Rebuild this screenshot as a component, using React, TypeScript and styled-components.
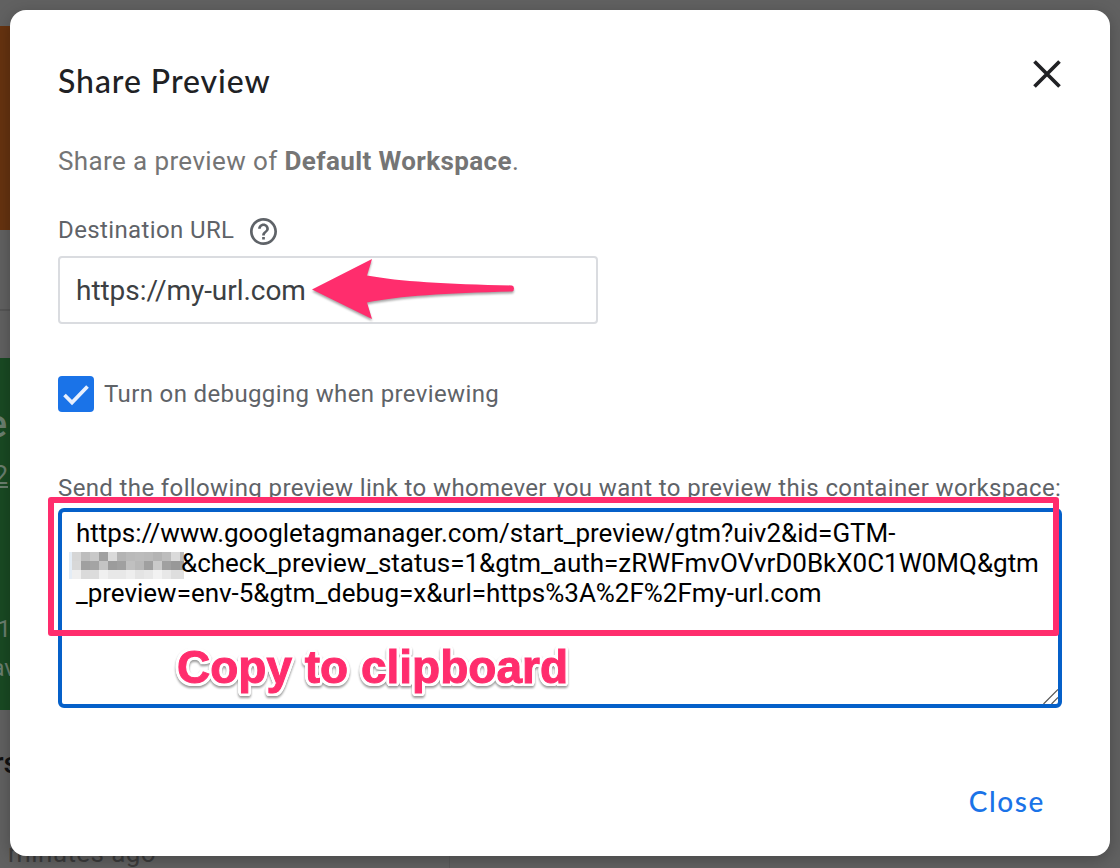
import React from "react";
import styled, { createGlobalStyle } from "styled-components";

const Global = createGlobalStyle`
  * { box-sizing: border-box; }
  body { margin: 0; background: #616161; font-family: Roboto, "Liberation Sans", sans-serif; overflow: hidden; }
`;
const Screen = styled.main`
  position: relative;
  display: flex;
  width: 1120px;
  height: 868px;
  padding: 10px 10px 12px;
  overflow: hidden;
`;
const Backdrop = styled.div`
  position: absolute;
  inset: 0;
  display: flex;
  flex-direction: column;
  background: #616161;
`;
const Band = styled.div<{ $h: number; $bg?: string; $line?: string; $edge?: boolean }>`
  position: relative;
  width: 450px;
  height: ${(p) => p.$h}px;
  flex: none;
  background: ${(p) => p.$bg ?? "#616161"};
  border-bottom: ${(p) => (p.$line ? `2px solid ${p.$line}` : "0")};
  border-right: ${(p) => (p.$edge ? "1px solid #595959" : "0")};
`;
const Peek = styled.span<{ $y: number; $right: number; $size: number; $color: string; $weight?: number; $ls?: number; $underline?: boolean }>`
  position: absolute;
  top: ${(p) => p.$y}px;
  right: calc(100% - ${(p) => p.$right}px);
  font-size: ${(p) => p.$size}px;
  line-height: ${(p) => p.$size}px;
  font-weight: ${(p) => p.$weight ?? 400};
  letter-spacing: ${(p) => p.$ls ?? 0}px;
  color: ${(p) => p.$color};
  text-decoration: ${(p) => (p.$underline ? "underline" : "none")};
  white-space: nowrap;
`;
const Dialog = styled.section`
  position: relative;
  display: flex;
  flex-direction: column;
  width: 1100px;
  height: 846px;
  padding: 48px 48px 0;
  border-radius: 16px;
  background: #fff;
  box-shadow: 0 4px 16px rgba(0, 0, 0, 0.25);
`;
const Header = styled.header`
  display: flex;
  justify-content: space-between;
  height: 46px;
`;
const Title = styled.h1`
  margin: 0;
  font: 500 32px/45px Lato, sans-serif;
  letter-spacing: 0.95px;
  color: #202124;
`;
const CloseIcon = styled.svg`
  width: 28px;
  height: 28px;
  margin: 2px 1.5px 0 0;
`;
const Intro = styled.p`
  margin: 39px 0 0;
  font-size: 26px;
  line-height: 36px;
  letter-spacing: 0.39px;
  color: #757575;
  white-space: nowrap;
`;
const Label = styled.div<{ $top: number }>`
  display: flex;
  align-items: center;
  gap: 16px;
  height: 32px;
  margin-top: ${(p) => p.$top}px;
  font-size: 24px;
  letter-spacing: 0.375px;
  color: #5f6368;
  white-space: nowrap;
`;
const HelpIcon = styled.svg`
  width: 27px;
  height: 27px;
  margin-top: 3px;
`;
const UrlField = styled.div`
  position: relative;
  display: flex;
  align-items: center;
  width: 540px;
  height: 68px;
  margin-top: 10px;
  padding-left: 16px;
  border: 2px solid #dadce0;
  border-radius: 4px;
  font-size: 28px;
  letter-spacing: -0.04px;
  color: #3c4043;
`;
const Arrow = styled.svg`
  position: absolute;
  left: 250px;
  top: -2px;
  filter: drop-shadow(0 2px 1px rgba(0, 0, 0, 0.35));
`;
const CheckRow = styled.label`
  display: flex;
  align-items: center;
  gap: 10px;
  height: 36px;
  margin-top: 52px;
  font-size: 24px;
  letter-spacing: 0.365px;
  color: #5f6368;
  white-space: nowrap;
`;
const CheckBox = styled.span`
  display: flex;
  width: 36px;
  height: 36px;
  border-radius: 4px;
  background: #1a73e8;
`;
const LinkBox = styled.div`
  position: relative;
  width: 1004px;
  height: 200px;
  margin-top: 4px;
  padding: 6px 14px;
  border: 4px solid #0560c9;
  border-radius: 6px;
  font-size: 26px;
  letter-spacing: -0.015px;
  color: #000;
`;
const Line = styled.div`
  display: flex;
  height: 30px;
  line-height: 30px;
  white-space: nowrap;
`;
const Mosaic = styled.svg`
  flex: none;
  width: 115px;
  height: 27px;
  margin: 4px -3px 0 -7px;
`;
const Grip = styled.svg`
  position: absolute;
  right: 0;
  bottom: 0;
`;
const Highlight = styled.div`
  position: absolute;
  left: -14px;
  top: -15px;
  width: 1011px;
  height: 139px;
  border: 6px solid #ff2d6d;
  border-radius: 3px;
`;
const outline = Array.from({ length: 20 }, (_, i) => {
  const a = (i / 20) * Math.PI * 2;
  return `${(Math.cos(a) * 3.2).toFixed(2)}px ${(Math.sin(a) * 3.2).toFixed(2)}px 0 #fff`;
}).join(", ");
const Caption = styled.strong`
  position: absolute;
  left: 115px;
  top: 128px;
  font: 700 46px/54px "Liberation Sans", sans-serif;
  letter-spacing: 0;
  color: #ff2d6d;
  -webkit-text-stroke: 1px #ff2d6d;
  text-shadow: ${outline};
  filter: drop-shadow(0 2px 1px rgba(0, 0, 0, 0.4));
  white-space: nowrap;
`;
const Footer = styled.footer`
  display: flex;
  justify-content: flex-end;
  margin-top: 74px;
  padding-right: 17px;
`;
const CloseButton = styled.button`
  padding: 0;
  border: 0;
  background: none;
  font: 500 28px/38px Lato, sans-serif;
  letter-spacing: 1.6px;
  color: #1a73e8;
`;

const tones = [
  ["#d6d6d6", "#bdbdbd", "#c8c8c8", "#a0a0a0", "#dadada", "#b4b4b4", "#bababa", "#bcbcbc", "#bababa", "#b4b4b4", "#bdbdbd", "#dadada", "#bababa"],
  ["#d8d8d8", "#a0a0a0", "#a4a4a4", "#c4c4c4", "#9c9c9c", "#a0a0a0", "#c0c0c0", "#b8b8b8", "#a0a0a0", "#cacaca", "#a0a0a0", "#989898", "#a0a0a0"],
  ["#efefef", "#dadada", "#dcdcdc", "#f0f0f0", "#e8e8e8", "#e8e8e8", "#eee", "#e4e4e4", "#e8e8e8", "#f2f2f2", "#e8e8e8", "#dedede", "#e2e2e2"],
];

export default function App() {
  return (
    <>
      <Global />
      <Screen>
        <Backdrop>
          <Band $h={26} />
          <Band $h={204} $bg="#663310" />
          <Band $h={81} $line="#555" />
          <Band $h={47} />
          <Band $h={352} $bg="#194a23">
            <Peek $y={47} $right={7} $size={38} $weight={500} $color="#6b7f6f">e</Peek>
            <Peek $y={104} $right={8} $size={26} $color="#6b7f6f" $underline>2</Peek>
            <Peek $y={259} $right={11} $size={24} $color="#6b7f6f">1</Peek>
            <Peek $y={298} $right={16} $size={24} $color="#6b7f6f">av</Peek>
          </Band>
          <Band $h={158} $edge>
            <Peek $y={38} $right={19} $size={30} $weight={500} $color="#111">rs</Peek>
            <Peek $y={130} $right={156} $size={26} $ls={0.4} $color="#3c3c3c">minutes ago</Peek>
          </Band>
        </Backdrop>
        <Dialog>
          <Header>
            <Title>Share Preview</Title>
            <CloseIcon viewBox="0 0 28 28" stroke="#202124" strokeWidth="3.7">
              <path d="M1.5 1.5 26.5 26.5M26.5 1.5 1.5 26.5" />
            </CloseIcon>
          </Header>
          <Intro>
            Share a preview of <b>Default Workspace</b>.
          </Intro>
          <Label $top={35}>
            Destination URL
            <HelpIcon viewBox="2 2 20 20" fill="#5f6368">
              <path d="M11 18h2v-2h-2v2zm1-16C6.48 2 2 6.48 2 12s4.48 10 10 10 10-4.480 10-10S17.520 2 12 2zm0 18c-4.410 0-8-3.590-8-8s3.590-8 8-8 8 3.590 8 8-3.590 8-8 8zm0-14c-2.210 0-4 1.790-4 4h2c0-1.100.9-2 2-2s2 .9 2 2c0 2-3 1.750-3 5h2c0-2.250 3-2.500 3-5 0-2.210-1.790-4-4-4z" />
            </HelpIcon>
          </Label>
          <UrlField>
            https://my-url.com
            <Arrow width="210" height="68" viewBox="0 0 210 68">
              <path d="M2 33.500 62 3 57 19.500C90 25.500 135 28 202 29.500q2 .5 2 3t-2 3C135 37 90 40 57 46.500L62 63Z" fill="#ff2d6d" />
            </Arrow>
          </UrlField>
          <CheckRow>
            <CheckBox>
              <svg width="36" height="36" viewBox="0 0 36 36" fill="none" stroke="#e8f0fe" strokeWidth="3.7">
                <path d="M6.500 19 14 26.500 29.500 10.500" />
              </svg>
            </CheckBox>
            Turn on debugging when previewing
          </CheckRow>
          <Label $top={60}>
            Send the following preview link to whomever you want to preview this container workspace:
          </Label>
          <LinkBox>
            <Line>https://www.googletagmanager.com/start_preview/gtm?uiv2&amp;id=GTM-</Line>
            <Line>
              <Mosaic viewBox="0 0 115 27" shapeRendering="crispEdges">
                <rect width="3" height="27" fill="#e4edf6" />
                {tones.map((row, y) =>
                  row.map((fill, x) => (
                    <rect key={`${x}-${y}`} x={x * 9 + 3} y={y * 9} width="9" height="9" fill={fill} />
                  ))
                )}
              </Mosaic>
              &amp;check_preview_status=1&amp;gtm_auth=zRWFmvOVvrD0BkX0C1W0MQ&amp;gtm
            </Line>
            <Line>_preview=env-5&amp;gtm_debug=x&amp;url=https%3A%2F%2Fmy-url.com</Line>
            <Grip width="16" height="16" viewBox="0 0 16 16" stroke="#555" strokeWidth="1.2">
              <path d="M1.500 16 16 1.500M9.500 16 16 9.500" />
            </Grip>
            <Highlight />
            <Caption>Copy to clipboard</Caption>
          </LinkBox>
          <Footer>
            <CloseButton>Close</CloseButton>
          </Footer>
        </Dialog>
      </Screen>
    </>
  );
}
